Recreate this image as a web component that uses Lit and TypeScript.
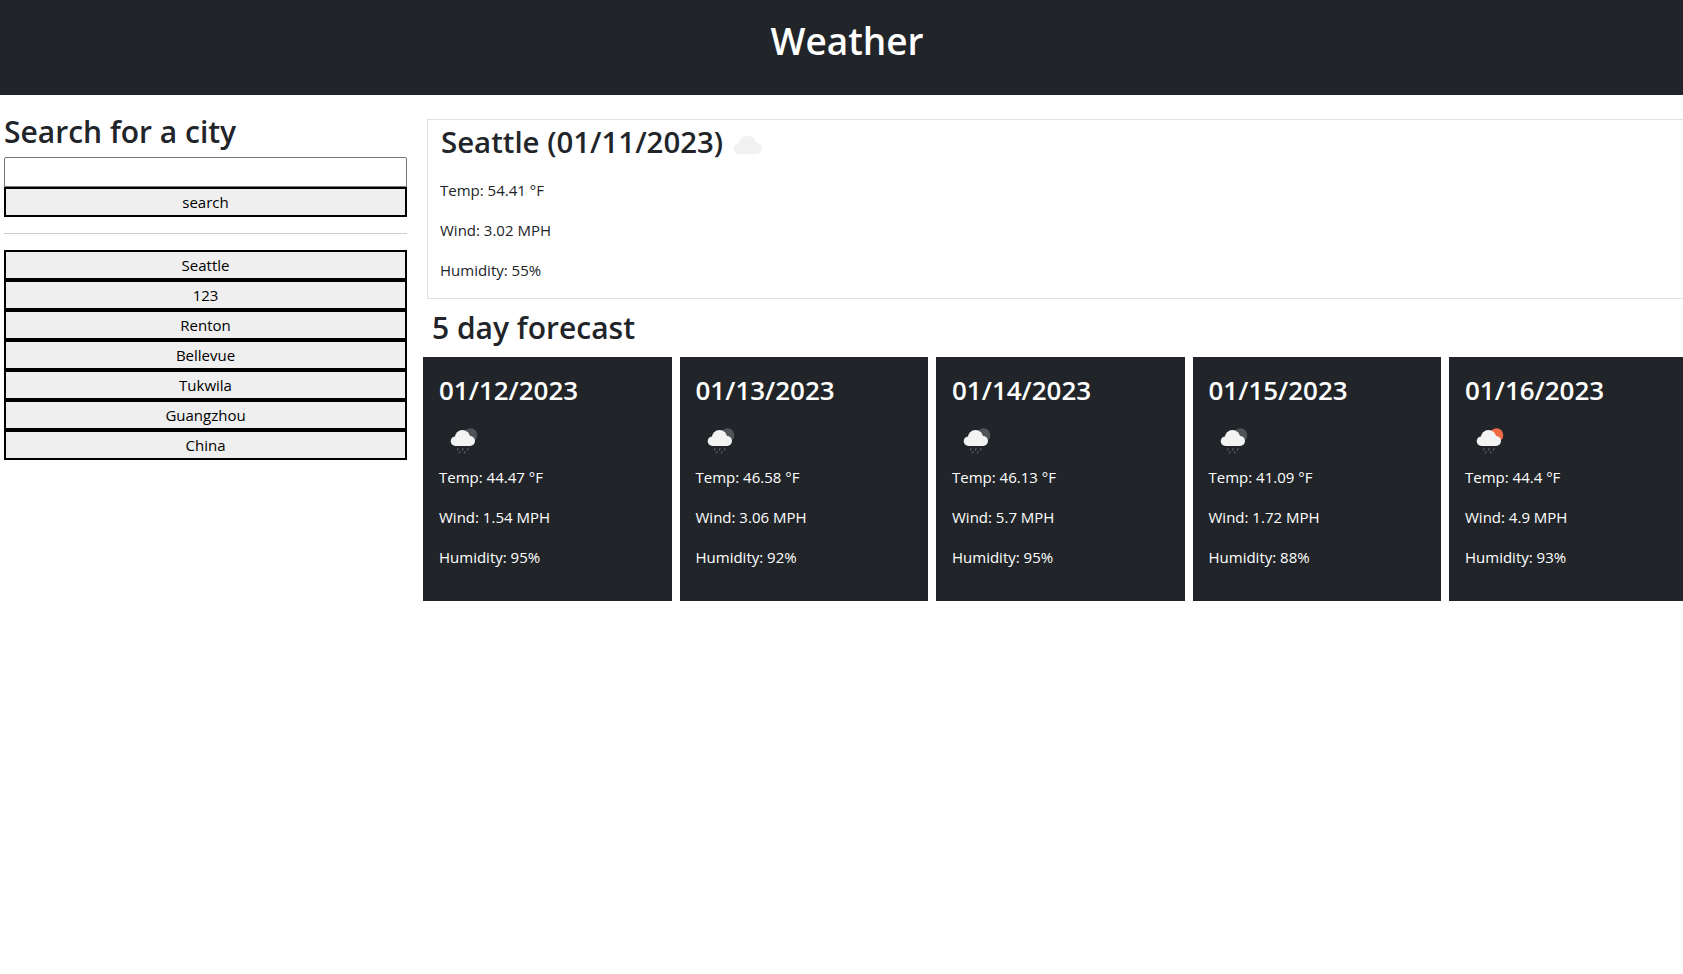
import { LitElement, html, css, svg } from "lit";
import { customElement, state } from "lit/decorators.js";

interface Day {
  date: string;
  temp: string;
  wind: string;
  humidity: string;
  sun?: boolean;
}

const cloud = (fill: string) => svg`<g fill=${fill}>
  <circle cx="16.5" cy="28.2" r="4.8"></circle>
  <circle cx="23.5" cy="24.6" r="7.6"></circle>
  <circle cx="31" cy="28" r="5"></circle>
  <rect x="16" y="26" width="15" height="7"></rect>
</g>`;

@customElement("app-root")
export class AppRoot extends LitElement {
  static styles = css`
    :host {
      display: block;
      width: 1683px;
      height: 974px;
      overflow: hidden;
      background: #fff;
      color: #212529;
      font-family: "Open Sans", "Noto Sans", sans-serif;
      font-size: 15px;
      line-height: 24px;
    }
    header {
      width: 1694px;
      height: 95px;
      box-sizing: border-box;
      padding-top: 17px;
      background: #212529;
      color: #fff;
      text-align: center;
    }
    h1 {
      margin: 0;
      font-size: 37px;
      font-weight: 600;
      line-height: 48px;
    }
    h2 {
      margin: 0;
      font-size: 30px;
      font-weight: 600;
      line-height: 38px;
    }
    p {
      margin: 0 0 16px;
    }
    main {
      display: flex;
      align-items: flex-start;
      width: 1700px;
    }
    .side {
      flex: none;
      width: 403px;
      margin: 0 16px 0 4px;
      padding-top: 18px;
    }
    .side h2 {
      margin-bottom: 6px;
    }
    input {
      display: block;
      width: 100%;
      height: 30px;
      box-sizing: border-box;
      margin: 0;
      border: 1px solid #767676;
      border-radius: 2px 2px 0 0;
      background: #fff;
    }
    button {
      display: block;
      width: 100%;
      height: 30px;
      box-sizing: border-box;
      margin: 0;
      padding: 0;
      border: 2px solid #000;
      background: #efefef;
      color: #000;
      font: inherit;
      line-height: 24px;
    }
    hr {
      height: 1px;
      margin: 16px 0;
      border: 0;
      background: #cfcfcf;
    }
    .content {
      flex: none;
      width: 1277px;
      padding-top: 24px;
    }
    .today {
      margin-left: 4px;
      height: 180px;
      box-sizing: border-box;
      padding: 0 12px;
      border: 1px solid #dfdfdf;
    }
    .today-title {
      display: flex;
      align-items: center;
      height: 44px;
      margin-bottom: 14px;
    }
    .today-title h2 {
      margin-left: 1px;
      font-size: 29.4px;
    }
    .today-title svg {
      margin: 6px 0 0 10px;
      width: 30px;
      height: 20px;
    }
    .forecast-title {
      margin: 10px 0 10px 9px;
    }
    .cards {
      display: flex;
      gap: 8px;
    }
    .card {
      flex: none;
      width: 248.5px;
      height: 244px;
      box-sizing: border-box;
      padding: 16px;
      background: #212529;
      color: #fff;
    }
    .card h3 {
      margin: 0 0 6px;
      font-size: 26px;
      font-weight: 600;
      line-height: 34px;
    }
    .card svg {
      display: block;
      width: 50px;
      height: 50px;
      margin-bottom: 2px;
    }
  `;

  @state() private cities = ["Seattle", "123", "Renton", "Bellevue", "Tukwila", "Guangzhou", "China"];

  @state() private days: Day[] = [
    { date: "01/12/2023", temp: "44.47", wind: "1.54", humidity: "95" },
    { date: "01/13/2023", temp: "46.58", wind: "3.06", humidity: "92" },
    { date: "01/14/2023", temp: "46.13", wind: "5.7", humidity: "95" },
    { date: "01/15/2023", temp: "41.09", wind: "1.72", humidity: "88" },
    { date: "01/16/2023", temp: "44.4", wind: "4.9", humidity: "93", sun: true },
  ];

  private rainIcon(sun: boolean) {
    return svg`<svg viewBox="0 0 50 50">
      <circle cx="31.5" cy="22" r="6.8" fill=${sun ? "#ef6a45" : "#4f5256"}></circle>
      ${cloud("#f3f3f3")}
      <g stroke="#55585c" stroke-width="1.3" stroke-linecap="round">
        <path d="M19 35.5 l-.5 1.6 M24 35.5 l-.5 1.6 M29 35.5 l-.5 1.6 M21 38.6 l-.5 1.4 M26 38.6 l-.5 1.4"></path>
      </g>
    </svg>`;
  }

  render() {
    return html`
      <header><h1>Weather</h1></header>
      <main>
        <section class="side">
          <h2>Search for a city</h2>
          <input type="text" />
          <button>search</button>
          <hr />
          ${this.cities.map((city) => html`<button>${city}</button>`)}
        </section>
        <section class="content">
          <div class="today">
            <div class="today-title">
              <h2>Seattle (01/11/2023)</h2>
              <svg viewBox="11 16.5 26 17">${cloud("#f1f1f1")}</svg>
            </div>
            <p>Temp: 54.41 °F</p>
            <p>Wind: 3.02 MPH</p>
            <p>Humidity: 55%</p>
          </div>
          <h2 class="forecast-title">5 day forecast</h2>
          <div class="cards">
            ${this.days.map(
              (day) => html`<article class="card">
                <h3>${day.date}</h3>
                ${this.rainIcon(!!day.sun)}
                <p>Temp: ${day.temp} °F</p>
                <p>Wind: ${day.wind} MPH</p>
                <p>Humidity: ${day.humidity}%</p>
              </article>`
            )}
          </div>
        </section>
      </main>
    `;
  }
}
